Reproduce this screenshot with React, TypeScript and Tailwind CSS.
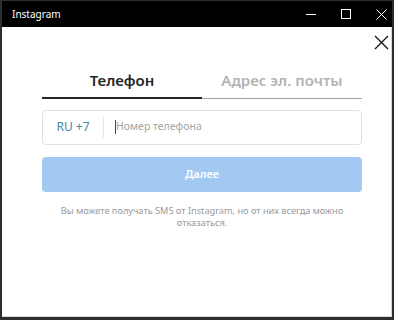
export default function App() {
  return (
    <div
      className="flex h-[320px] w-[394px] flex-col overflow-hidden border-x-2 border-b-[3px] border-t border-[#2e2e2e] bg-black"
      style={{ fontFamily: '"Noto Sans", "Open Sans", sans-serif' }}
    >
      {/* title bar */}
      <div className="flex h-[26px] shrink-0 items-center bg-black pl-[10px] text-white">
        <span className="text-[10px]">Instagram</span>
        <div className="ml-auto flex h-full items-center gap-[13px]">
          <div className="flex h-full w-[22px] items-center justify-center">
            <div className="h-px w-[10px] bg-white" />
          </div>
          <div className="flex h-full w-[22px] items-center justify-center">
            <div className="h-[10px] w-[10px] border border-white" />
          </div>
          <div className="flex h-full w-[22px] items-center justify-center">
            <svg width="11" height="11" viewBox="0 0 11 11" stroke="#fff" strokeWidth="1">
              <path d="M0.5 0.5 10.5 10.5M10.5 0.5 0.5 10.5" />
            </svg>
          </div>
        </div>
      </div>

      {/* content */}
      <div className="flex flex-1 flex-col border-b border-r border-[#d8d8d8] bg-white">
        <div className="flex justify-end pr-[2px] pt-[8px]">
          <svg width="15" height="15" viewBox="0 0 15 15" stroke="#111" strokeWidth="1.3">
            <path d="M1 1 14 14M14 1 1 14" />
          </svg>
        </div>

        <div className="ml-[40px] mr-[29px] mt-[19px]">
          <div className="flex items-end">
            <div className="flex-1 border-b-2 border-[#262626] pb-[5px] text-center text-[15px] font-semibold text-[#262626]">
              Телефон
            </div>
            <div className="flex-1 border-b border-[#a3a3a3] pb-[6px] text-center text-[15px] font-semibold text-[#b3b3b3]">
              Адрес эл. почты
            </div>
          </div>

          <div className="mt-[11px] flex h-[35px] items-center rounded-[4px] border border-[#e0e0e0]">
            <span className="w-[60px] text-center text-[12px] text-[#4f86a8]">RU +7</span>
            <div className="h-[22px] w-px bg-[#e6e6e6]" />
            <div className="ml-[11px] h-[14px] w-px bg-[#444]" />
            <span className="text-[10.5px] text-[#a5a5a5]">Номер телефона</span>
          </div>

          <div className="mt-[12px] flex h-[35px] items-center justify-center rounded-[4px] bg-[#a1c9f2] text-[11px] font-semibold text-white">
            Далее
          </div>

          <p className="mt-[13px] text-center text-[9.2px] leading-[12px] text-[#9a9a9a]">
            Вы можете получать SMS от Instagram, но от них всегда можно
            <br />
            отказаться.
          </p>
        </div>
      </div>
    </div>
  );
}
